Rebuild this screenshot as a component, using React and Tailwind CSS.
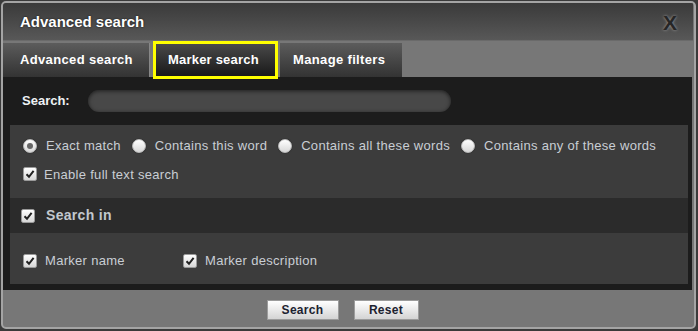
import React, { useState } from "react";

const font = { fontFamily: '"Liberation Sans", Arial, sans-serif' };

const Radio = ({ checked, label, onClick }) => (
  <label className="flex items-center cursor-pointer" onClick={onClick}>
    <span className="w-[14px] h-[14px] rounded-full bg-gradient-to-b from-[#ffffff] to-[#d8d8d8] border border-[#bbbbbb] flex items-center justify-center shadow-[0_0_1px_rgba(0,0,0,0.6)]">
      {checked && <span className="w-[6px] h-[6px] rounded-full bg-[#666666]"></span>}
    </span>
    <span className="ml-[9px] text-[13px] tracking-[0.3px] text-[#c9ced4]">{label}</span>
  </label>
);

const Check = ({ checked, onClick }) => (
  <span
    className="w-[14px] h-[14px] rounded-[2px] bg-gradient-to-b from-[#ffffff] to-[#d6d6d6] border border-[#9a9a9a] flex items-center justify-center cursor-pointer"
    onClick={onClick}
  >
    {checked && (
      <svg width="10" height="10" viewBox="0 0 10 10">
        <path d="M1.5 5.2 L4 7.8 L8.6 1.8" fill="none" stroke="#222" strokeWidth="2" />
      </svg>
    )}
  </span>
);

const App = () => {
  const [mode, setMode] = useState(0);
  const [fullText, setFullText] = useState(true);
  const [searchIn, setSearchIn] = useState(true);
  const [name, setName] = useState(true);
  const [desc, setDesc] = useState(true);

  const modes = [
    "Exact match",
    "Contains this word",
    "Contains all these words",
    "Contains any of these words",
  ];

  return (
    <div className="w-[698px] h-[331px] bg-[#3a3a3a] p-[1px]" style={font}>
      <div className="w-[695px] h-[328px] rounded-[5px] border-2 border-[#a4a4a4] bg-[#777777] flex flex-col overflow-hidden">
        {/* title */}
        <div className="h-[38px] mr-[1px] bg-gradient-to-b from-[#3a3a3a] to-[#585858] flex items-center justify-between pl-[17px] pr-[16px] border-b border-[#6a6a6a]">
          <span className="text-[15px] font-bold text-white mt-[1px] [text-shadow:0_0_2px_rgba(0,0,0,0.8)]">
            Advanced search
          </span>
          <span className="text-[21px] font-bold text-[#262626] [text-shadow:0_0_3px_rgba(255,255,255,0.5)] leading-none mt-[2px]">
            X
          </span>
        </div>

        {/* tabs */}
        <div className="h-[36px] flex items-end bg-[#777777]">
          <div className="h-[34px] w-[147px] bg-gradient-to-b from-[#5c5c5c] to-[#333333] flex items-center pl-[17px] text-[13px] tracking-[0.35px] font-bold text-white border-r border-[#888888]">
            Advanced search
          </div>
          <div className="h-[38px] w-[125px] ml-[3px] border-[3px] border-[#ffff00] bg-gradient-to-b from-[#4a4a4a] to-[#1a1a1a] flex items-center pl-[12px] text-[13px] tracking-[0.2px] font-bold text-white mb-[-2px] relative">
            Marker search
          </div>
          <div className="h-[34px] w-[122px] ml-[2px] bg-gradient-to-b from-[#5c5c5c] to-[#333333] flex items-center pl-[13px] text-[13px] tracking-[0.35px] font-bold text-white">
            Manage filters
          </div>
        </div>

        {/* content */}
        <div className="bg-[#1c1c1c] mr-[2px] pb-[6px] flex flex-col">
          <div className="h-[48px] flex items-center pl-[19px]">
            <span className="text-[13px] font-bold text-[#eef2f4] w-[66px]">Search:</span>
            <input
              className="w-[363px] h-[22px] rounded-full bg-[#484848] outline-none shadow-[inset_0_1px_4px_rgba(0,0,0,0.6)] px-3 text-[13px] text-white"
              type="text"
            />
          </div>

          <div className="ml-[7px] mr-[4px] bg-[#3c3c3c] flex flex-col">
            <div className="h-[73px] flex flex-col pl-[13px] pt-[11px]">
              <div className="flex items-center gap-[11px]">
                {modes.map((m, i) => (
                  <Radio key={m} label={m} checked={mode === i} onClick={() => setMode(i)} />
                ))}
              </div>
              <div className="flex items-center mt-[9px]">
                <Check checked={fullText} onClick={() => setFullText(!fullText)} />
                <span className="ml-[7px] text-[13px] tracking-[0.3px] text-[#c9ced4]">Enable full text search</span>
              </div>
            </div>

            <div className="h-[35px] bg-[#2b2b2b] flex items-center pl-[11px]">
              <Check checked={searchIn} onClick={() => setSearchIn(!searchIn)} />
              <span className="ml-[11px] text-[14px] tracking-[0.3px] font-bold text-[#c2c8ce]">Search in</span>
            </div>

            <div className="h-[51px] flex items-center pl-[13px] pt-[5px]">
              <div className="flex items-center w-[160px]">
                <Check checked={name} onClick={() => setName(!name)} />
                <span className="ml-[8px] text-[13px] tracking-[0.3px] text-[#c9ced4]">Marker name</span>
              </div>
              <div className="flex items-center">
                <Check checked={desc} onClick={() => setDesc(!desc)} />
                <span className="ml-[8px] text-[13px] tracking-[0.3px] text-[#c9ced4]">Marker description</span>
              </div>
            </div>
          </div>
        </div>

        {/* footer */}
        <div className="flex-1 flex items-center justify-center gap-[15px] pr-[12px] pt-[3px]">
          <button className="w-[72px] h-[20px] bg-gradient-to-b from-[#ffffff] to-[#d4d4d4] border border-[#9c9c9c] text-[12px] tracking-[0.3px] font-bold text-[#1c2230]">
            Search
          </button>
          <button className="w-[65px] h-[20px] bg-gradient-to-b from-[#ffffff] to-[#d4d4d4] border border-[#9c9c9c] text-[12px] tracking-[0.3px] font-bold text-[#1c2230]">
            Reset
          </button>
        </div>
      </div>
    </div>
  );
};

export default App;
